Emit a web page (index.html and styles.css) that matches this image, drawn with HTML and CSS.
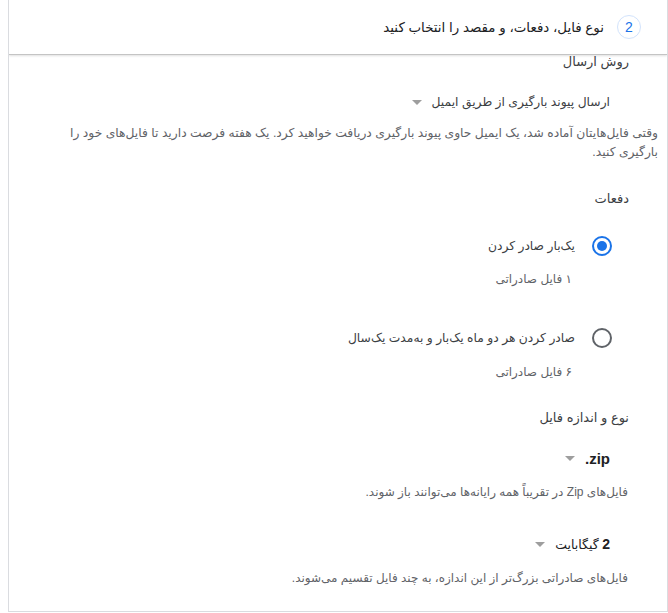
FILE: index.html
```html
<!DOCTYPE html>
<html lang="fa" dir="rtl">
<head>
<meta charset="utf-8">
<title>Takeout</title>
<link rel="stylesheet" href="styles.css">
</head>
<body>
<div class="panel">
  <div class="step-header">
    <span class="step-num">2</span>
    <span class="step-title">نوع فایل، دفعات، و مقصد را انتخاب کنید</span>
  </div>
  <div class="content">
    <div class="label first">روش ارسال</div>
    <div class="select s-method"><span>ارسال پیوند بارگیری از طریق ایمیل</span><i class="caret"></i></div>
    <p class="note">وقتی فایل‌هایتان آماده شد، یک ایمیل حاوی پیوند بارگیری دریافت خواهید کرد. یک هفته فرصت دارید تا فایل‌های خود را بارگیری کنید.</p>

    <div class="label l-freq">دفعات</div>
    <div class="radio-row r1"><span class="radio on"></span><span>یک‌بار صادر کردن</span></div>
    <div class="sub s1">۱ فایل صادراتی</div>
    <div class="radio-row r2"><span class="radio"></span><span>صادر کردن هر دو ماه یک‌بار و به‌مدت یک‌سال</span></div>
    <div class="sub s2">۶ فایل صادراتی</div>

    <div class="label l-type">نوع و اندازه فایل</div>
    <div class="select s-type"><bdi class="val zip" dir="ltr">.zip</bdi><i class="caret"></i></div>
    <div class="desc d1">فایل‌های Zip در تقریباً همه رایانه‌ها می‌توانند باز شوند.</div>
    <div class="select s-size"><span class="val"><b class="num">2</b> گیگابایت</span><i class="caret"></i></div>
    <div class="desc d2">فایل‌های صادراتی بزرگ‌تر از این اندازه، به چند فایل تقسیم می‌شوند.</div>
  </div>
</div>
</body>
</html>
```

FILE: styles.css
```css
html, body {
  margin: 0;
  padding: 0;
  background: #fff;
}
body {
  font-family: "Liberation Sans", "DejaVu Sans", sans-serif;
  color: #202124;
  font-size: 13px;
}
.panel {
  width: 658px;
  margin-left: 6px;
  border: 1px solid #dadce0;
  border-top: none;
  overflow: hidden;
}
.step-header {
  position: relative;
  z-index: 1;
  height: 54px;
  background: #fff;
  border-bottom: 1px solid #c4c4c4;
  box-shadow: 0 1px 2px rgba(0,0,0,0.12);
  display: flex;
  align-items: center;
  padding-right: 26px;
  gap: 13px;
}
.step-num {
  width: 22px;
  height: 22px;
  border: 1px solid #d2e3fc;
  border-radius: 50%;
  color: #1a73e8;
  font-size: 14px;
  display: flex;
  align-items: center;
  justify-content: center;
  font-family: "Liberation Sans", sans-serif;
}
.step-title {
  font-size: 13.4px;
  color: #202124;
}
.content {
  margin-top: -3px;
  padding-bottom: 23px;
}
.label {
  line-height: 20px;
  font-size: 13px;
  color: #3c4043;
  padding-right: 38px;
}
.select {
  display: flex;
  align-items: center;
  gap: 10px;
  height: 20px;
  font-size: 12.3px;
  color: #3c4043;
  padding-right: 57px;
}
.select .val {
  font-size: 12.5px;
  color: #202124;
}
.select .zip {
  font-size: 15px;
  font-weight: bold;
}
.select .num {
  font-size: 14px;
  font-weight: bold;
}
.caret {
  width: 0;
  height: 0;
  border-left: 5px solid transparent;
  border-right: 5px solid transparent;
  border-top: 5px solid #9e9e9e;
}
.note {
  margin: 12px 0 0;
  padding: 0 9px 0 50px;
  font-size: 12.3px;
  line-height: 19px;
  color: #5f6368;
}
.radio-row {
  display: flex;
  align-items: center;
  gap: 17px;
  height: 20px;
  padding-right: 55px;
  font-size: 12.3px;
  color: #3c4043;
}
.radio {
  width: 16px;
  height: 16px;
  border: 2px solid #5f6368;
  border-radius: 50%;
  display: flex;
  align-items: center;
  justify-content: center;
}
.radio.on { border-color: #1a73e8; }
.radio.on::after {
  content: "";
  width: 10px;
  height: 10px;
  border-radius: 50%;
  background: #1a73e8;
}
.sub {
  line-height: 20px;
  font-size: 12px;
  color: #5f6368;
  padding-right: 95px;
}
.desc {
  line-height: 20px;
  font-size: 12px;
  color: #5f6368;
  padding-right: 39px;
}
.s-method { margin-top: 20px; }
.l-freq { margin-top: 27px; }
.r1 { margin-top: 27px; }
.s1 { margin-top: 13px; }
.r2 { margin-top: 39px; }
.s2 { margin-top: 14px; }
.l-type { margin-top: 26px; }
.s-type { margin-top: 20px; }
.d1 { margin-top: 14px; }
.s-size { margin-top: 32px; }
.d2 { margin-top: 14px; }
```
